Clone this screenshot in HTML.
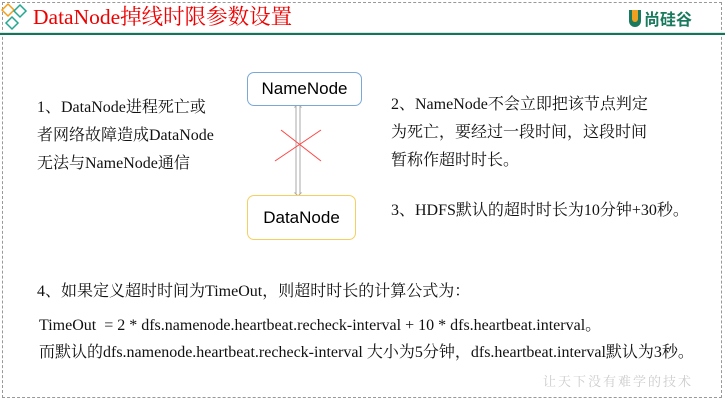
<!DOCTYPE html><html><head><meta charset="utf-8"><style>
body{margin:0;width:725px;height:400px;position:relative;background:#fff;overflow:hidden;font-family:"Liberation Serif","Noto Serif CJK SC","Noto Sans CJK SC",serif;color:#111}
.t{position:absolute;white-space:nowrap;font-size:16px;line-height:18px}
.box{position:absolute;border-radius:7px;background:#fff;font-family:"Liberation Sans",sans-serif;font-size:17px;text-align:center;color:#000}
</style></head><body>
<div style="position:absolute;left:2px;top:2px;width:718px;height:394px;border:1px dashed #999"></div>
<div style="position:absolute;left:0;top:32px;width:725px;height:2px;background:#d8e8e2"></div>
<div style="position:absolute;left:0;top:33px;width:725px;height:2px;background:#17735a"></div>
<svg style="position:absolute;left:0;top:0" width="30" height="34"><g fill="none" stroke-width="1.5"><path d="M8 4 L14 10 L8 16 L2 10Z" stroke="#f0a020"/><path d="M20 5 L26 11 L20 17 L14 11Z" stroke="#20a890"/><path d="M12 17 L18 23 L12 29 L6 23Z" stroke="#20a890"/></g></svg>
<div class="t" style="left:33px;top:5px;font-size:21.5px;line-height:24px;color:#e00">DataNode掉线时限参数设置</div>
<div style="position:absolute;left:629px;top:10px;width:12px;height:17px;border-radius:0 0 6px 6px;background:#1a7a5e"></div>
<div style="position:absolute;left:632px;top:10px;width:6px;height:12px;border-radius:0 0 3px 3px;background:#f0a020"></div>
<div class="t" style="left:644px;top:9px;font-size:16px;color:#1a7a5e;font-family:'Noto Sans CJK SC',sans-serif;font-weight:bold">尚硅谷</div>
<div class="t" style="left:37px;top:99px">1、DataNode进程死亡或</div>
<div class="t" style="left:37px;top:127px">者网络故障造成DataNode</div>
<div class="t" style="left:37px;top:155px">无法与NameNode通信</div>
<div class="t" style="left:391px;top:96px">2、NameNode不会立即把该节点判定</div>
<div class="t" style="left:391px;top:124px">为死亡，要经过一段时间，这段时间</div>
<div class="t" style="left:391px;top:152px">暂称作超时时长。</div>
<div class="t" style="left:391px;top:202px">3、HDFS默认的超时时长为10分钟+30秒。</div>
<div class="t" style="left:37px;top:283px">4、如果定义超时时间为TimeOut，则超时时长的计算公式为：</div>
<div class="t" style="left:39px;top:317px;font-size:16px">TimeOut &nbsp;= 2 * dfs.namenode.heartbeat.recheck-interval + 10 * dfs.heartbeat.interval。</div>
<div class="t" style="left:39px;top:344px;font-size:16px">而默认的dfs.namenode.heartbeat.recheck-interval 大小为5分钟，dfs.heartbeat.interval默认为3秒。</div>
<svg style="position:absolute;left:0;top:0" width="725" height="400">
<path d="M295 107 L298 104 L301 107 L300 107 L300 193 L301 193 L298 196 L295 193 L296 193 L296 107Z" fill="#fff" stroke="#aaa"/>
<path d="M281 130 L321 161 M275 161 L321 130" stroke="#f44" stroke-width="1"/>
</svg>
<div class="box" style="left:247px;top:72px;width:113px;height:32px;border:1px solid #7aa8d8;line-height:32px">NameNode</div>
<div class="box" style="left:247px;top:195px;width:107px;height:43px;border:1px solid #f5d060;line-height:43px">DataNode</div>
<div class="t" style="left:543px;top:372px;font-size:13px;color:#ccc;letter-spacing:2px;font-family:'Noto Serif CJK SC',serif">让天下没有难学的技术</div>
</body></html>
